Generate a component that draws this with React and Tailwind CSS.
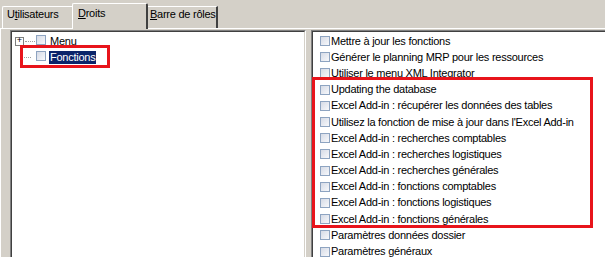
import React from "react";

const Check = () => (
  <span className="inline-block w-[10px] h-[10px] shrink-0 border border-[#8ea4c1] bg-gradient-to-br from-[#d6dbe6] to-[#f7f8fb]" />
);

const items = [
  "Mettre à jour les fonctions",
  "Générer le planning MRP pour les ressources",
  "Utiliser le menu XML Integrator",
  "Updating the database",
  "Excel Add-in : récupérer les données des tables",
  "Utilisez la fonction de mise à jour dans l'Excel Add-in",
  "Excel Add-in : recherches comptables",
  "Excel Add-in : recherches logistiques",
  "Excel Add-in : recherches générales",
  "Excel Add-in : fonctions comptables",
  "Excel Add-in : fonctions logistiques",
  "Excel Add-in : fonctions générales",
  "Paramètres données dossier",
  "Paramètres généraux",
];

export default function App() {
  return (
    <div className="relative w-[605px] h-[257px] overflow-hidden bg-[#d4d0c8] text-[11px] leading-none tracking-[-0.25px] text-black font-['Liberation_Sans',Arial,sans-serif]">
      {/* Tabs */}
      <div className="flex items-end h-[28px] pl-[2px]">
        <div className="h-[22px] w-[70px] border-t border-l border-white rounded-tl-[2px] flex items-start pt-[2px] pl-[4px] whitespace-nowrap">
          <span>U<u>t</u>ilisateurs</span>
        </div>
        <div className="relative z-10 -mb-px h-[26px] w-[76px] bg-[#d4d0c8] border-t border-l border-white border-r-2 border-r-[#404040] rounded-t-[2px] flex items-start pt-[4px] pl-[5px] whitespace-nowrap">
          <span><u>D</u>roits</span>
        </div>
        <div className="h-[22px] w-[70px] border-t border-white border-r-2 border-r-[#404040] flex items-start pt-[2px] pl-[2px] whitespace-nowrap">
          <span><u>B</u>arre de rôles</span>
        </div>
      </div>

      {/* Tab page */}
      <div className="flex h-[229px] border-t border-l border-white pl-[9px] pt-[1px] gap-[5px]">
        {/* Left tree panel */}
        <div className="w-[296px] border-t border-l border-[#808080] border-r border-r-white">
          <div className="h-full bg-white border-t border-l border-[#404040] border-r border-r-[#d4d0c8] pt-[1px]">
            <div className="flex items-center h-[16px] pl-[3px]">
              <span className="w-[9px] h-[9px] border border-[#808080] bg-white flex items-center justify-center text-[9px] leading-none tracking-normal">
                <span className="-mt-px">+</span>
              </span>
              <span className="w-[10px] border-t border-dotted border-[#a0a0a0] ml-[1px]" />
              <span className="ml-[1px]"><Check /></span>
              <span className="ml-[4px]">Menu</span>
            </div>
            <div className="flex items-center h-[16px] pl-[9px]">
              <span className="w-[10px] border-t border-dotted border-[#a0a0a0]" />
              <span className="ml-[5px]"><Check /></span>
              <span className="ml-[3px] bg-[#0a246a] text-white px-[1px] h-[13px] flex items-center">Fonctions</span>
            </div>
          </div>
        </div>

        {/* Right list panel */}
        <div className="flex-1 border-t border-l border-[#808080]">
          <div className="h-full bg-white border-t border-l border-[#404040] pl-[7px] pt-px">
            {items.map((t) => (
              <div key={t} className="flex items-center h-[16.2px] gap-[1px]">
                <Check />
                <span className="whitespace-nowrap">{t}</span>
              </div>
            ))}
          </div>
        </div>
      </div>

      {/* Red annotation boxes */}
      <div className="absolute left-[20px] top-[45px] w-[90px] h-[23px] border-[3px] border-[#e8141b]" />
      <div className="absolute left-[312px] top-[77px] w-[281px] h-[151px] border-[3px] border-[#e8141b]" />
    </div>
  );
}
